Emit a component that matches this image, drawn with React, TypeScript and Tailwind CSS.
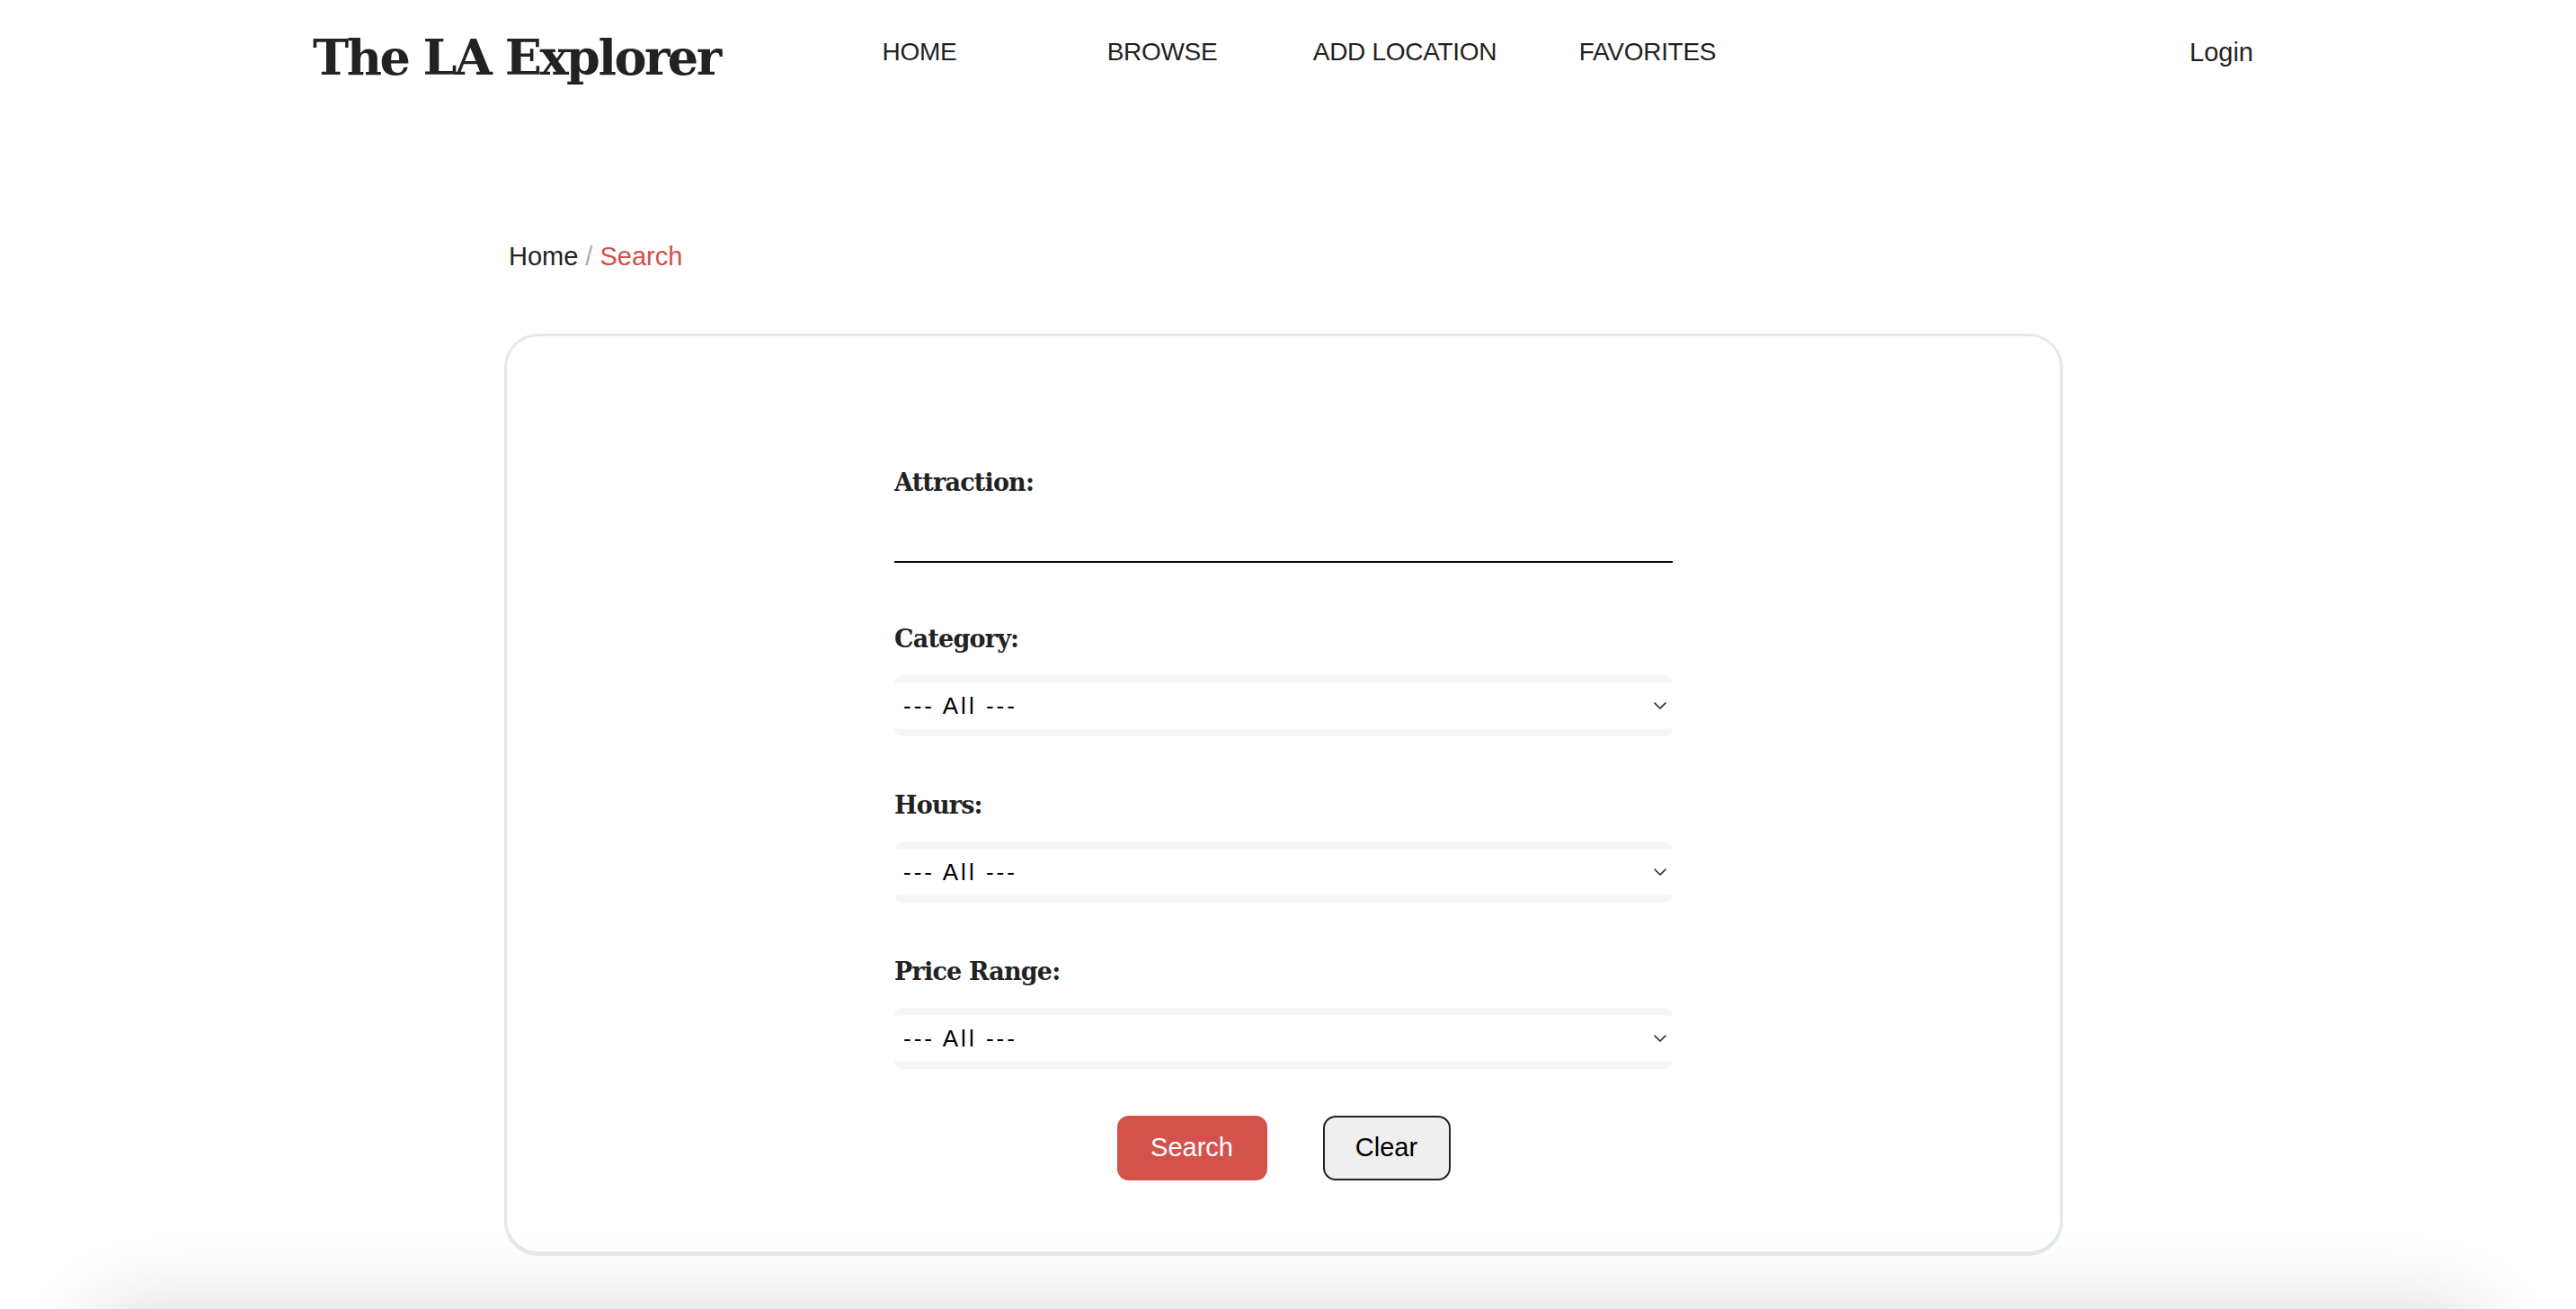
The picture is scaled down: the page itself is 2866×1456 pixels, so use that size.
import { useState } from "react";

const navItems = ["HOME", "BROWSE", "ADD LOCATION", "FAVORITES"];

const sans = "font-['Liberation_Sans',Arial,sans-serif]";
const slab = "font-['DejaVu_Serif',serif]";

const Chevron = () => (
  <svg width="14" height="9" viewBox="0 0 14 9" fill="none" className="pointer-events-none absolute right-[7px] top-1/2 -translate-y-1/2">
    <polyline points="1,1.5 7,7.5 13,1.5" stroke="#222" strokeWidth="1.6" strokeLinecap="round" strokeLinejoin="round" />
  </svg>
);

const Field = ({ label, value, onChange }: { label: string; value: string; onChange: (v: string) => void }) => (
  <div className="mt-[63px] first:mt-0">
    <label className={`${slab} block text-[27px] leading-none font-bold tracking-[-0.8px] text-[#222]`}>{label}</label>
    <div className="relative mt-[27px]">
      <select
        value={value}
        onChange={(e) => onChange(e.target.value)}
        className={`${sans} block h-[68px] w-full appearance-none rounded-[10px] border-y-8 border-[#f6f6f6] bg-white pl-[10px] text-[26px] tracking-[3px] text-black outline-none`}
      >
        <option value="">--- All ---</option>
      </select>
      <Chevron />
    </div>
  </div>
);

export default function App() {
  const [attraction, setAttraction] = useState("");
  const [category, setCategory] = useState("");
  const [hours, setHours] = useState("");
  const [price, setPrice] = useState("");

  const clear = () => {
    setAttraction("");
    setCategory("");
    setHours("");
    setPrice("");
  };

  return (
    <div className="h-screen overflow-hidden bg-white text-[#222]">
      {/* header */}
      <header className="flex items-start pl-[348px] pr-[359px] pt-[37px]">
        <h1 className={`${slab} w-[540px] text-[54px] leading-none font-bold tracking-[-2.5px] text-[#222]`}>The LA Explorer</h1>
        <nav className="mt-[7px] flex">
          {navItems.map((item) => (
            <a key={item} href="#" className={`${sans} w-[270px] text-center text-[28px] leading-none tracking-[-0.3px] text-[#222]`}>
              {item}
            </a>
          ))}
        </nav>
        <a href="#" className={`${sans} ml-auto mt-[7px] text-[29px] leading-none text-[#222]`}>Login</a>
      </header>

      <main className="ml-[561px] w-[1734px]">
        {/* breadcrumb */}
        <div className={`${sans} ml-[5px] mt-[180px] text-[29px] leading-none`}>
          <a href="#" className="text-[#222]">Home</a>
          <span className="mx-[8px] text-[#aaa]">/</span>
          <span className="text-[#d2504a]">Search</span>
        </div>

        {/* search card */}
        <div className="mt-[71px] rounded-[38px] border-[3px] border-[#e2eaea] bg-white pb-[79px] pt-[149px] shadow-[0_2px_0_#e2eaea]">
          <form className="mx-auto w-[866px]" onSubmit={(e) => e.preventDefault()}>
            <label className={`${slab} block text-[27px] leading-none font-bold tracking-[-0.8px] text-[#222]`}>Attraction:</label>
            <input
              value={attraction}
              onChange={(e) => setAttraction(e.target.value)}
              className={`${sans} mt-[20px] block h-[56px] w-full border-b-2 border-black bg-transparent text-[25px] outline-none`}
            />

            <div className="mt-[71px]">
              <Field label="Category:" value={category} onChange={setCategory} />
              <Field label="Hours:" value={hours} onChange={setHours} />
              <Field label="Price Range:" value={price} onChange={setPrice} />
            </div>

            <div className="mt-[52px] flex justify-center gap-[62px]">
              <button type="submit" className={`${sans} h-[72px] w-[167px] rounded-[13px] bg-[#d3524c] text-[29px] text-white`}>Search</button>
              <button type="button" onClick={clear} className={`${sans} h-[72px] w-[142px] rounded-[14px] border-2 border-[#222] bg-[#efefef] text-[29px] text-black`}>Clear</button>
            </div>
          </form>
        </div>
      </main>

      {/* footer peeking at the bottom edge */}
      <footer className="mx-[100px] mt-[61px] h-[200px] rounded-[60px] bg-[#e8e8e8] shadow-[0_0_80px_10px_rgba(0,0,0,0.13)]" />
    </div>
  );
}
